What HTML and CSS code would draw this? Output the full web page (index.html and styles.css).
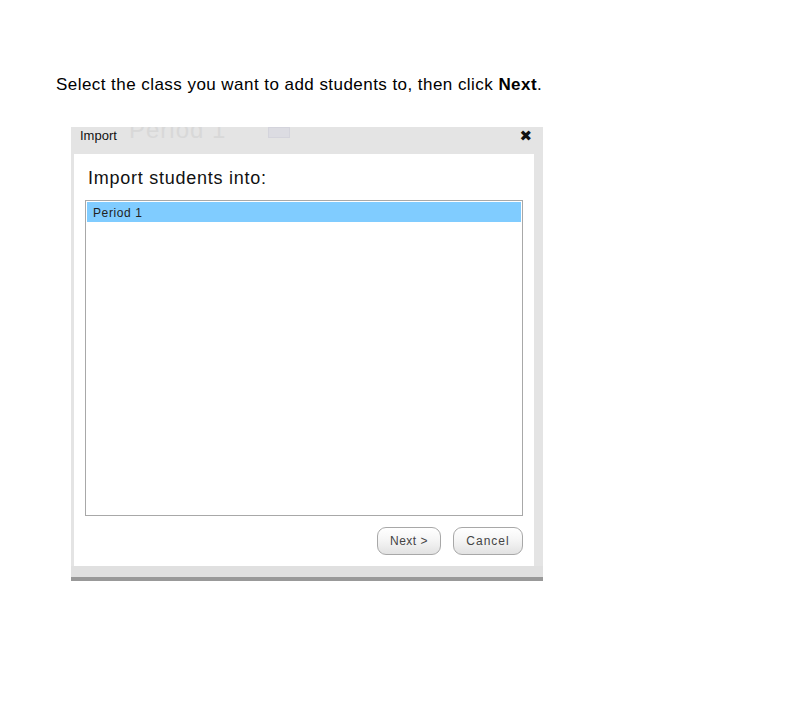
FILE: index.html
```html
<!DOCTYPE html>
<html>
<head>
<meta charset="utf-8">
<link rel="stylesheet" href="styles.css">
</head>
<body>
<p class="intro">Select the class you want to add students to, then click <b>Next</b>.</p>
<div class="dialog">
  <div class="titlebar">
    <span class="title">Import</span>
    <span class="ghost">Period 1</span>
    <span class="ghost-icon"></span>
    <span class="close">&#x2716;</span>
  </div>
  <div class="frame">
    <div class="panel">
      <h2 class="heading">Import students into:</h2>
      <div class="listbox">
        <div class="item selected">Period 1</div>
      </div>
      <div class="buttons">
        <button class="btn next">Next &gt;</button>
        <button class="btn cancel">Cancel</button>
      </div>
    </div>
  </div>
  <div class="bottom"></div>
</div>
</body>
</html>
```
FILE: styles.css
```css
html, body { margin: 0; padding: 0; background: #fff; }
body { font-family: "Liberation Sans", Arial, sans-serif; color: #000; }
.intro {
  margin: 0;
  padding: 75px 0 0 56px;
  font-size: 17px;
  line-height: 19px;
  letter-spacing: 0.45px;
}
.dialog {
  margin: 33px 0 0 71px;
  width: 472px;
  background: #e4e4e4;
}
.titlebar {
  position: relative;
  height: 27px;
  overflow: hidden;
  background: #e4e4e4;
}
.title {
  position: absolute;
  left: 9px;
  top: 1px;
  font-size: 13px;
  line-height: 16px;
  color: #111;
  z-index: 2;
}
.ghost {
  position: absolute;
  left: 58px;
  top: -10px;
  font-size: 24px;
  line-height: 26px;
  color: #d8d8d8;
  letter-spacing: 1px;
}
.ghost-icon {
  position: absolute;
  left: 197px;
  top: 0;
  width: 20px;
  height: 9px;
  background: #dcdce2;
  border: 1px solid #d4d4dc;
}
.close {
  position: absolute;
  right: 11px;
  top: 0;
  font-size: 15px;
  line-height: 18px;
  font-family: "DejaVu Sans", sans-serif;
  color: #111;
}
.frame {
  padding: 0 9px 0 3px;
}
.panel {
  background: #fff;
  padding: 13px 11px 12px 11px;
  height: 387px;
}
.heading {
  margin: 0 0 10px 3px;
  font-weight: normal;
  font-size: 18px;
  line-height: 23px;
  letter-spacing: 0.75px;
  color: #111;
}
.listbox {
  height: 312px;
  border: 1px solid #a8a8a8;
  padding: 1px;
}
.item {
  font-size: 12px;
  line-height: 20px;
  padding: 1px 0 0 6px;
  height: 20px;
  box-sizing: border-box;
  letter-spacing: 0.6px;
  color: #222;
}
.item.selected { background: #80ccff; }
.buttons {
  display: flex;
  justify-content: flex-end;
  gap: 12px;
  margin-top: 11px;
}
.btn {
  height: 28px;
  border: 1px solid #a8a8a8;
  border-radius: 9px;
  background: linear-gradient(#ffffff, #f4f4f4 50%, #e2e2e2);
  font-family: "Liberation Sans", Arial, sans-serif;
  font-size: 12px;
  color: #444;
  padding: 0;
  letter-spacing: 0.5px;
}
.btn.next { width: 64px; }
.btn.cancel { width: 70px; letter-spacing: 1px; }
.bottom {
  height: 11px;
  background: #e0e0e0;
  border-bottom: 4px solid #999;
}
```
